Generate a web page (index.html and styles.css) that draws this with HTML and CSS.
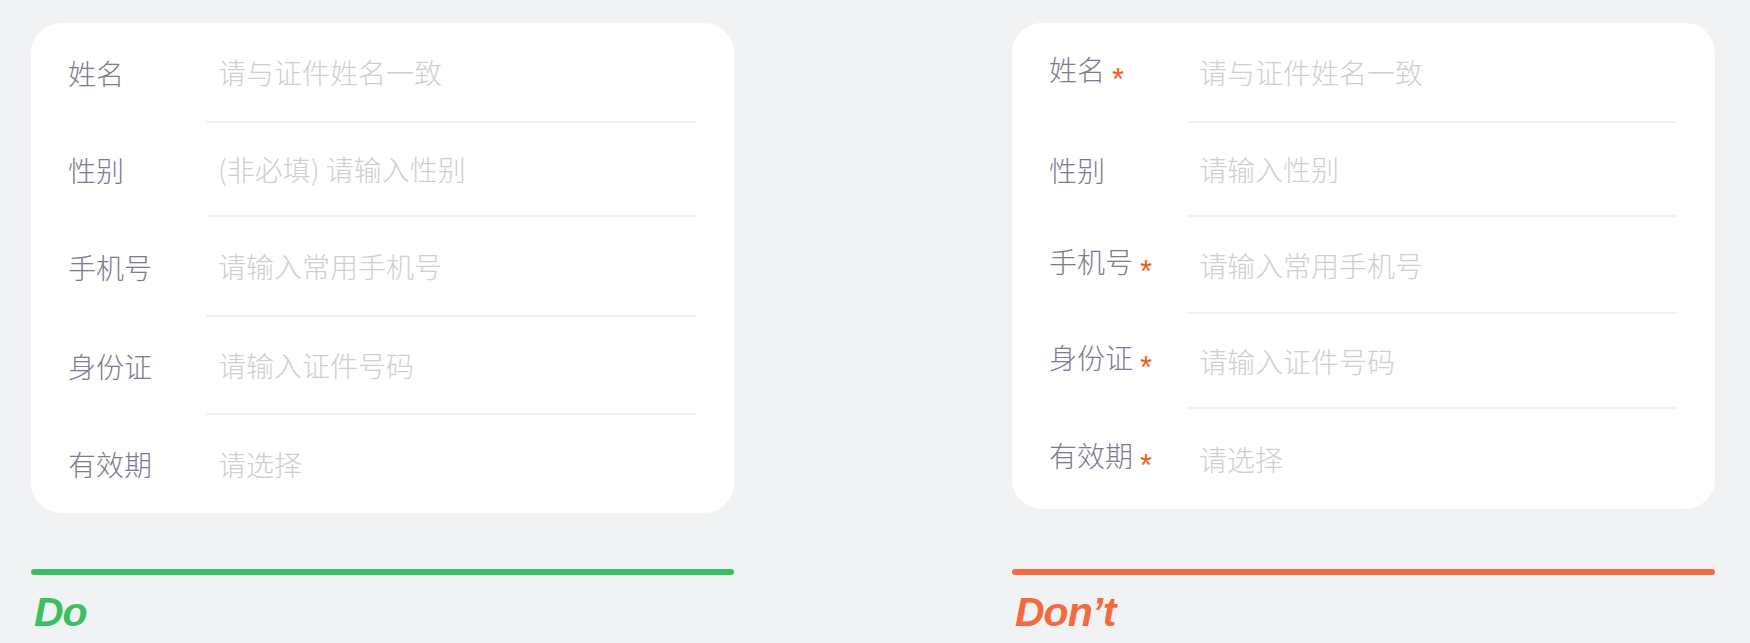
FILE: index.html
```html
<!DOCTYPE html>
<html>
<head>
    <title>表单必填项 Do / Don't</title>
    <link rel="stylesheet" href="styles.css">
</head>
<body>
    <div class="page">
        <div class="column">
            <div class="card card-do">
                <div class="row">
                    <div class="label">姓名</div>
                    <div class="field">请与证件姓名一致</div>
                </div>
                <div class="row">
                    <div class="label">性别</div>
                    <div class="field">(非必填) 请输入性别</div>
                </div>
                <div class="row">
                    <div class="label">手机号</div>
                    <div class="field">请输入常用手机号</div>
                </div>
                <div class="row">
                    <div class="label">身份证</div>
                    <div class="field">请输入证件号码</div>
                </div>
                <div class="row">
                    <div class="label">有效期</div>
                    <div class="field">请选择</div>
                </div>
            </div>
            <div class="bar bar-do"></div>
            <div class="verdict verdict-do">Do</div>
        </div>

        <div class="column">
            <div class="card card-dont">
                <div class="row">
                    <div class="label">姓名<span class="required">*</span></div>
                    <div class="field">请与证件姓名一致</div>
                </div>
                <div class="row">
                    <div class="label">性别</div>
                    <div class="field">请输入性别</div>
                </div>
                <div class="row">
                    <div class="label">手机号<span class="required">*</span></div>
                    <div class="field">请输入常用手机号</div>
                </div>
                <div class="row">
                    <div class="label">身份证<span class="required">*</span></div>
                    <div class="field">请输入证件号码</div>
                </div>
                <div class="row">
                    <div class="label">有效期<span class="required">*</span></div>
                    <div class="field">请选择</div>
                </div>
            </div>
            <div class="bar bar-dont"></div>
            <div class="verdict verdict-dont">Don’t</div>
        </div>
    </div>
</body>
</html>
```

FILE: styles.css
```css
body {
    margin: 0;
    padding: 0;
    background-color: #f0f2f4;
    font-family: "Noto Sans CJK SC", "Noto Sans", sans-serif;
}
.page {
    display: flex;
    justify-content: space-between;
    padding: 23px 35px 0 31px;
}
.column {
    width: 703px;
}
.card {
    background: #fff;
    border-radius: 30px;
    padding-left: 37px;
}
.row {
    display: flex;
    align-items: center;
    height: 98px;
}
.card-do .row:nth-child(1) { height: 100px; }
.card-do .row:nth-child(2) { height: 94px; }
.card-do .row:nth-child(3) { height: 100px; }
.card-dont .row:nth-child(1) { height: 100px; }
.card-dont .row:nth-child(2) { height: 94px; }
.card-dont .row:nth-child(3) { height: 97px; }
.card-dont .row:nth-child(4) { height: 95px; }
.card-dont .row:nth-child(5) { height: 100px; }
.label {
    width: 150px;
    font-size: 28px;
    font-weight: 300;
    color: #7c7b93;
    white-space: nowrap;
}
.required {
    font-family: "Liberation Sans", Arial, sans-serif;
    font-size: 31px;
    color: #f25c19;
    margin-left: 7px;
    vertical-align: -9px;
}
.field {
    flex: 1;
    align-self: stretch;
    display: flex;
    align-items: center;
    margin-left: -12px;
    margin-right: 38px;
    padding-left: 12px;
    font-size: 28px;
    font-weight: 300;
    color: #cfcfd2;
    border-bottom: 2px solid #f2f2f4;
}
.row:last-child .field {
    border-bottom: none;
}
.bar {
    height: 6px;
    border-radius: 3px;
    margin-top: 56px;
}
.bar-do {
    background: #3ac061;
}
.bar-dont {
    background: #f5693e;
    margin-top: 60px;
}
.verdict {
    font-family: "Liberation Sans", Arial, sans-serif;
    font-weight: bold;
    font-style: italic;
    font-size: 41px;
    letter-spacing: -1px;
    margin-top: 14px;
    padding-left: 3px;
}
.verdict-do {
    color: #3ac061;
}
.verdict-dont {
    color: #f5693e;
}
```
